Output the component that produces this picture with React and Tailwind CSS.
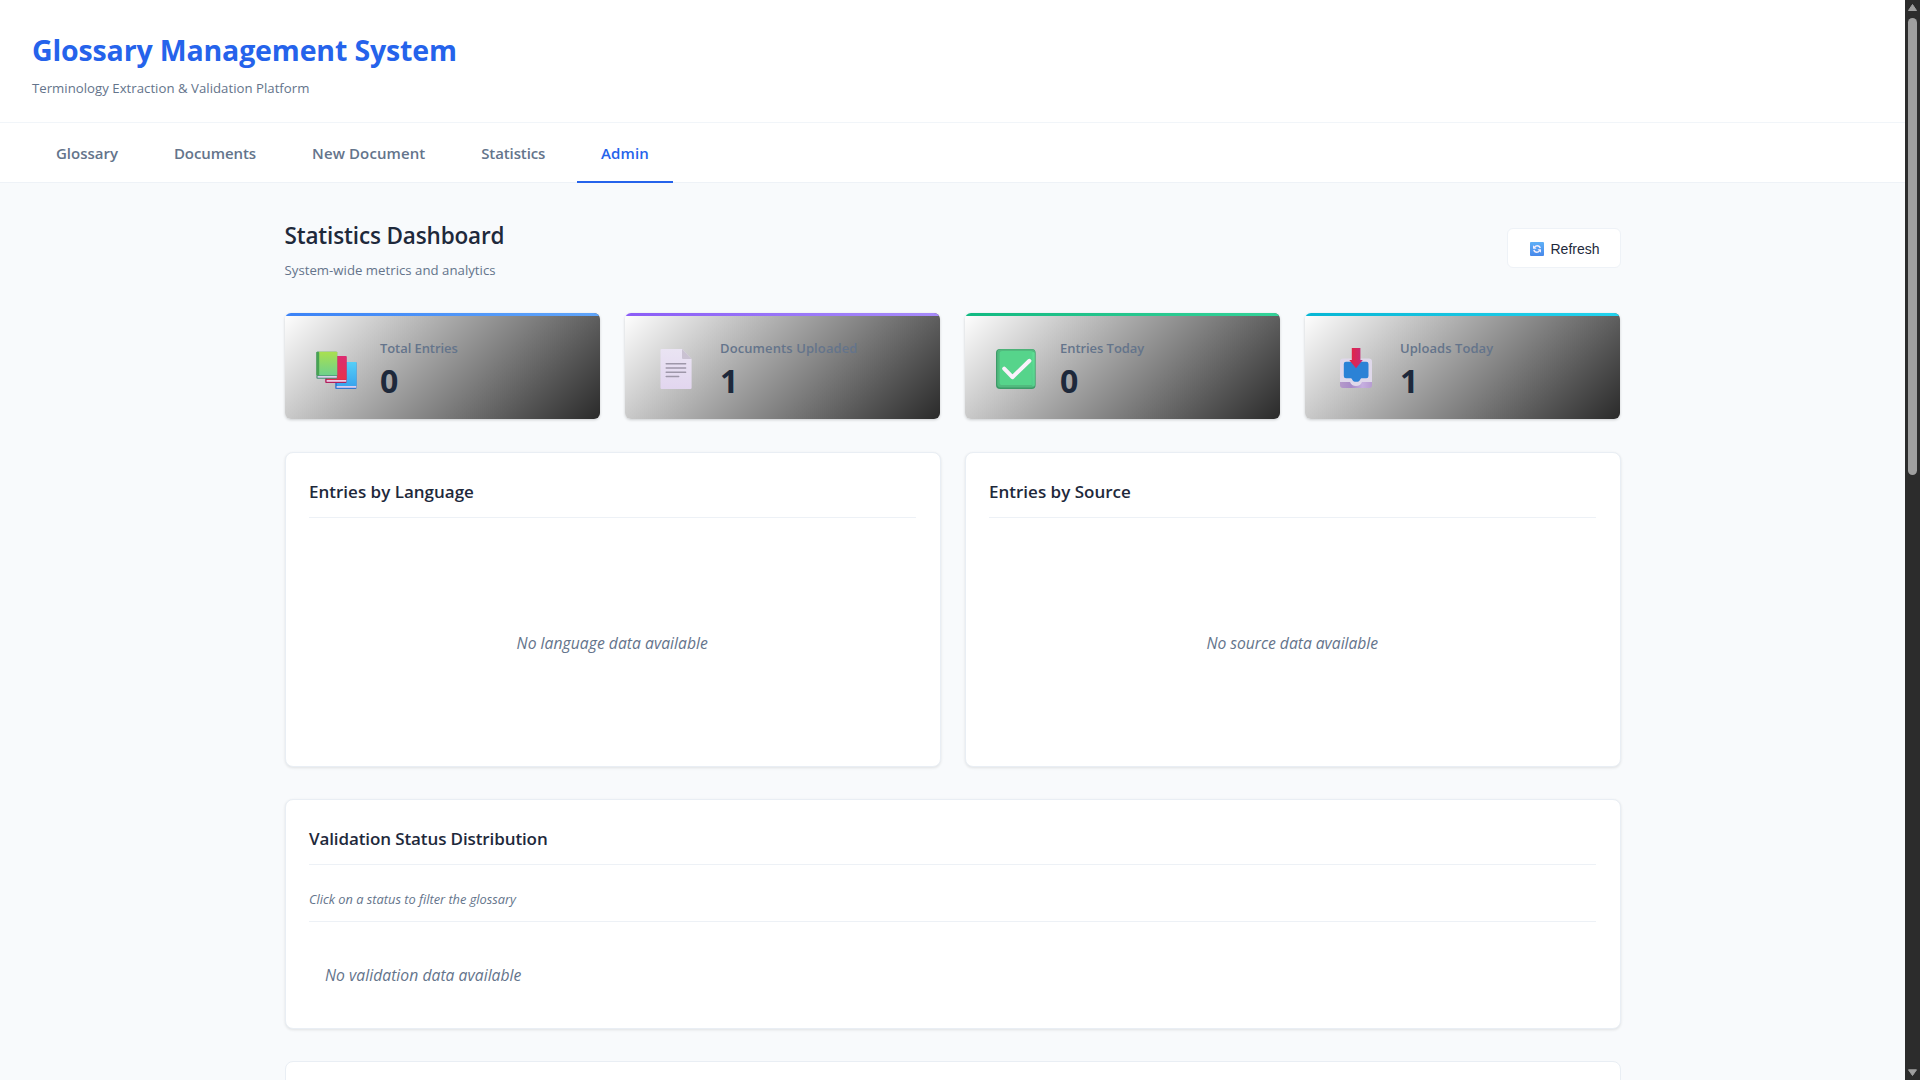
import React from 'react';

function BooksIcon() {
  return (
    <svg width="41" height="44" viewBox="0 0 41 44" className="block">
      <defs>
        <linearGradient id="bkG" x1="0" y1="0" x2="0" y2="1"><stop offset="0" stopColor="#a9e04f" /><stop offset="1" stopColor="#6fd18c" /></linearGradient>
        <linearGradient id="bkR" x1="0" y1="0" x2="0" y2="1"><stop offset="0" stopColor="#dd2c72" /><stop offset="1" stopColor="#e8334a" /></linearGradient>
        <linearGradient id="bkB" x1="0" y1="0" x2="0" y2="1"><stop offset="0" stopColor="#55cff7" /><stop offset="1" stopColor="#3aa5ee" /></linearGradient>
      </defs>
      <rect x="19.2" y="15" width="21.3" height="27" rx="1" fill="#3577cf" />
      <rect x="21" y="15" width="19.5" height="24" rx="0.8" fill="url(#bkB)" />
      <rect x="20.6" y="39" width="19.6" height="1.8" fill="#d9cdf0" />
      <rect x="9.2" y="9" width="21.3" height="27" rx="1" fill="#b3205c" />
      <rect x="11" y="9" width="19.5" height="23.8" rx="0.8" fill="url(#bkR)" />
      <rect x="10.6" y="33" width="19.6" height="1.8" fill="#eccbe6" />
      <rect x="0.4" y="4.7" width="20.8" height="27" rx="1" fill="#4b8f77" />
      <rect x="0.4" y="4.7" width="3.4" height="23.6" rx="0.8" fill="#48a352" />
      <rect x="3.2" y="4.7" width="18" height="23.6" rx="0.6" fill="url(#bkG)" />
      <rect x="1.6" y="29" width="19.2" height="1.7" fill="#dccfee" />
    </svg>
  );
}

function PageIcon() {
  return (
    <svg width="41" height="44" viewBox="0 0 41 44" className="block">
      <defs>
        <linearGradient id="pgF" x1="0" y1="0" x2="0" y2="1"><stop offset="0" stopColor="#eae4f3" /><stop offset="1" stopColor="#e2d6ef" /></linearGradient>
      </defs>
      <path d="M5.5 2H26L35.6 12V40.8A1.2 1.2 0 0 1 34.4 42H5.7A1.2 1.2 0 0 1 4.5 40.8V3A1 1 0 0 1 5.5 2z" fill="url(#pgF)" />
      <path d="M26 2L35.6 12H27A1 1 0 0 1 26 11z" fill="#cac2d2" />
      <path d="M10.2 16.8H29.6M10.2 21H29.6M10.2 25.3H29.6M10.2 29.6H22.7" stroke="#9e97a9" strokeWidth="1.5" strokeLinecap="round" />
    </svg>
  );
}

function CheckIcon() {
  return (
    <svg width="41" height="44" viewBox="0 0 41 44" className="block">
      <defs>
        <linearGradient id="ckF" x1="0" y1="1" x2="1" y2="0"><stop offset="0" stopColor="#52c98a" /><stop offset="1" stopColor="#60e596" /></linearGradient>
      </defs>
      <rect x="0" y="2" width="39.6" height="40" rx="4" fill="#3d9a68" />
      <rect x="1.2" y="2.2" width="38" height="38.2" rx="3.4" fill="#51ba7e" />
      <rect x="3.6" y="4" width="34" height="34" rx="2.6" fill="#56d48b" />
      <rect x="35.6" y="5" width="3" height="34" rx="1.5" fill="url(#ckF)" />
      <path d="M8.2 21.6L16.4 30.2L33.4 13.8" fill="none" stroke="#fbf1fc" strokeWidth="4" strokeLinecap="round" strokeLinejoin="round" />
    </svg>
  );
}

function InboxIcon() {
  return (
    <svg width="41" height="44" viewBox="0 0 41 44" className="block">
      <defs>
        <linearGradient id="ibA" x1="0" y1="0" x2="1" y2="0"><stop offset="0" stopColor="#e8243c" /><stop offset="1" stopColor="#c32b7d" /></linearGradient>
        <linearGradient id="ibT" x1="0" y1="0" x2="1" y2="0"><stop offset="0" stopColor="#b59acb" /><stop offset="0.35" stopColor="#a88cc8" /><stop offset="0.7" stopColor="#c6afe0" /><stop offset="1" stopColor="#b79cd2" /></linearGradient>
      </defs>
      <path d="M4 20V38A3 3 0 0 0 7 41H33A3 3 0 0 0 36 38V20z" fill="url(#ibT)" />
      <path d="M7.2 11.5H32.8A3.2 3.2 0 0 1 36 14.7V35H26C25 37.6 23 39 20 39S15 37.6 14 35H4V14.7A3.2 3.2 0 0 1 7.2 11.5z" fill="#dfd8ea" />
      <path d="M10 14.7H30.3A2.2 2.2 0 0 1 32.5 16.9V29A2.2 2.2 0 0 1 30.3 31.2H26C24.8 31.2 24.5 31.8 24 32.9C23.4 34.2 22 34.7 20.2 34.7S17 34.2 16.4 32.9C15.9 31.8 15.6 31.2 14.4 31.2H10A2.2 2.2 0 0 1 7.8 29V16.9A2.2 2.2 0 0 1 10 14.7z" fill="#2b82d6" />
      <path d="M15.8 1H24.4V13H26.8L20 21.2L13.3 13H15.8z" fill="url(#ibA)" />
    </svg>
  );
}

function RefreshIcon() {
  return (
    <svg width="14" height="14" viewBox="0 0 14 14" className="block">
      <defs>
        <linearGradient id="rfF" x1="0" y1="0" x2="0" y2="1"><stop offset="0" stopColor="#5fb0f7" /><stop offset="1" stopColor="#4788ea" /></linearGradient>
      </defs>
      <rect width="14" height="14" rx="1" fill="url(#rfF)" />
      <path d="M4.6 5.2C5.4 4.1 6.2 3.8 7.2 3.8C8.7 3.8 9.9 4.7 10.2 6.1M9.4 8.9C8.7 9.8 7.9 10.2 6.9 10.2C5.4 10.2 4.2 9.3 3.9 7.9" fill="none" stroke="#f3eefc" strokeWidth="1.5" />
      <path d="M3 3.2V6.8H6.6zM11 10.8V7.2H7.4z" fill="#f3eefc" />
    </svg>
  );
}

const tabs = [
  { label: 'Glossary', width: 'w-[110px]', tracking: 'tracking-normal' },
  { label: 'Documents', width: 'w-[130px]', tracking: 'tracking-[-0.08px]' },
  { label: 'New Document', width: 'w-[161.5px]', tracking: 'tracking-[0.1px]' },
  { label: 'Statistics', width: 'w-[111.5px]', tracking: 'tracking-[-0.1px]' },
  { label: 'Admin', width: 'w-[96px]', tracking: 'tracking-[0.15px]', active: true },
];

const stats = [
  { label: 'Total Entries', value: '0', Icon: BooksIcon, bar: 'from-[#3b82f6] to-[#60a5fa]', tracking: 'tracking-[-0.08px]' },
  { label: 'Documents Uploaded', value: '1', Icon: PageIcon, bar: 'from-[#8b5cf6] to-[#a78bfa]', tracking: 'tracking-[0.1px]' },
  { label: 'Entries Today', value: '0', Icon: CheckIcon, bar: 'from-[#10b981] to-[#34d399]', tracking: 'tracking-[-0.06px]' },
  { label: 'Uploads Today', value: '1', Icon: InboxIcon, bar: 'from-[#06b6d4] to-[#22d3ee]', tracking: 'tracking-[0.05px]' },
];

function StatCard({ label, value, Icon, bar, tracking }) {
  return (
    <div className="h-[106px] flex-1 overflow-hidden rounded-md bg-[linear-gradient(135deg,#ffffff_0%,#2a2a2a_100%)] shadow-[0_1px_3px_rgba(0,0,0,0.18)]">
      <div className={`h-[3px] bg-linear-to-r ${bar}`} />
      <div className="flex pl-[31px]">
        <div className="w-10 shrink-0 pt-[31px]"><Icon /></div>
        <div className="pl-6 pt-[22px]">
          <div className={`h-5 whitespace-nowrap text-[13px] leading-5 font-semibold text-[#64748b] ${tracking}`}>{label}</div>
          <div className="mt-1 text-[32px] leading-[38px] font-bold text-[#1e293b]">{value}</div>
        </div>
      </div>
    </div>
  );
}

function Panel({ title, className, children }) {
  return (
    <section className={`flex flex-col rounded-lg border border-[#e9eef4] bg-white pr-6 pl-[23.5px] pt-[27px] shadow-[0_1px_3px_rgba(0,0,0,0.1)] ${className}`}>
      <h3 className="border-b border-[#edf1f6] pb-[13px] text-[17px] leading-6 font-semibold text-[#1e293b]">{title}</h3>
      {children}
    </section>
  );
}

function Scrollbar() {
  return (
    <div className="flex w-[15px] shrink-0 flex-col items-center bg-[#2c2c2c]">
      <svg width="15" height="18" viewBox="0 0 15 18" className="block shrink-0"><path d="M7.5 4.5L11.5 10.5H3.5z" fill="#9f9f9f" stroke="#9f9f9f" strokeLinejoin="round" /></svg>
      <div className="h-[457px] w-[9px] rounded-full bg-[#9f9f9f]" />
      <div className="flex-1" />
      <svg width="15" height="18" viewBox="0 0 15 18" className="block shrink-0"><path d="M7.5 13.5L3.5 7.8H11.5z" fill="#9f9f9f" stroke="#9f9f9f" strokeLinejoin="round" /></svg>
    </div>
  );
}

export default function App() {
  return (
    <div className="flex h-screen overflow-hidden bg-[#f8fafc] font-['Open_Sans','Noto_Sans',sans-serif]">
      <div className="min-w-0 flex-1 overflow-hidden">
        <header className="h-[123px] border-b border-[#f1f5f9] bg-white px-8 pt-8">
          <h1 className="text-[28.5px] leading-9 font-bold tracking-[-0.15px] text-[#2563eb]">Glossary Management System</h1>
          <p className="mt-2.5 text-[13.2px] leading-5 tracking-[0.02px] text-[#64748b]">Terminology Extraction &amp; Validation Platform</p>
        </header>
        <nav className="flex h-[60px] gap-2 border-b border-[#eef2f7] bg-white px-8">
          {tabs.map((t) => (
            <a
              key={t.label}
              className={`-mb-px flex h-[60px] justify-center border-b-2 pt-[18px] text-[15px] leading-6 font-semibold whitespace-nowrap ${t.width} ${t.tracking} ${t.active ? 'border-[#2563eb] text-[#2563eb]' : 'border-transparent text-[#64748b]'}`}
            >
              {t.label}
            </a>
          ))}
        </nav>
        <main className="mx-auto w-[1336px] pt-9">
          <div className="flex h-[94px] items-start justify-between">
            <div>
              <h2 className="pt-px text-[22.5px] leading-8 font-semibold tracking-[-0.15px] text-[#1e293b]">Statistics Dashboard</h2>
              <p className="mt-2 text-[13.2px] leading-5 tracking-[0.02px] text-[#64748b]">System-wide metrics and analytics</p>
            </div>
            <button className="mt-[9px] flex h-10 w-[114px] items-center gap-[7px] rounded-md border border-[#eef2f7] bg-white pl-[22px] pt-px font-['Liberation_Sans',sans-serif] text-[14px] text-[#1e293b]">
              <RefreshIcon />
              <span className="pt-px">Refresh</span>
            </button>
          </div>
          <div className="flex gap-[25px] px-[0.5px]">
            {stats.map((s) => <StatCard key={s.label} {...s} />)}
          </div>
          <div className="mt-[33px] flex gap-6">
            <Panel title="Entries by Language" className="h-[315px] flex-1">
              <div className="flex flex-1 items-center justify-center pt-1 text-[15.7px] tracking-[0.03px] text-[#64748b] italic">No language data available</div>
            </Panel>
            <Panel title="Entries by Source" className="h-[315px] flex-1">
              <div className="flex flex-1 items-center justify-center pt-1 text-[15.7px] tracking-[-0.03px] text-[#64748b] italic">No source data available</div>
            </Panel>
          </div>
          <Panel title="Validation Status Distribution" className="mt-8 h-[230px] tracking-[-0.11px]">
            <p className="mt-6 border-b border-[#edf1f6] pb-3 text-[12.8px] leading-5 tracking-normal text-[#64748b] italic">Click on a status to filter the glossary</p>
            <p className="mt-[41px] pl-4 text-[15.7px] leading-6 tracking-[0.03px] text-[#64748b] italic">No validation data available</p>
          </Panel>
          <section className="mt-8 h-[200px] rounded-lg border border-[#e9eef4] bg-white" />
        </main>
      </div>
      <Scrollbar />
    </div>
  );
}
